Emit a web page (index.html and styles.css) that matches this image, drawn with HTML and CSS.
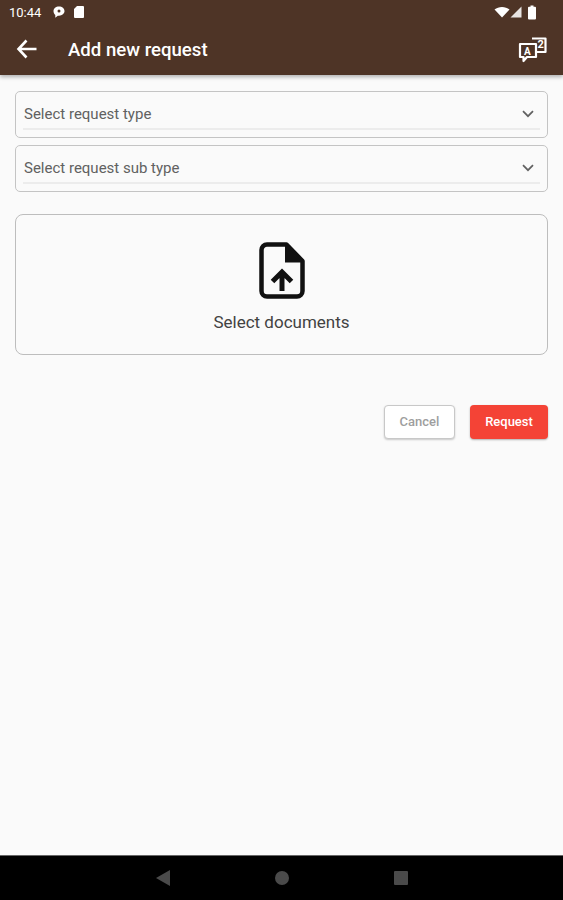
FILE: index.html
```html
<!DOCTYPE html>
<html lang="en">
<head>
  <meta charset="UTF-8">
  <meta name="viewport" content="width=device-width, initial-scale=1.0">
  <title>Add new request</title>
  <link rel="stylesheet" href="styles.css">
</head>
<body>

<header class="top">
  <div class="status-bar">
    <span class="time">10:44</span>
    <svg class="st-icon" width="14" height="14" viewBox="0 0 14 14"><path d="M7 1.500c3.200 0 5.500 2 5.500 4.600S10.200 10.700 7 10.700H5.800L3.300 12.800V10C2.200 9.200 1.500 7.800 1.500 6.100 1.500 3.500 3.800 1.500 7 1.500z" fill="#fff"/><circle cx="7" cy="6" r="1.500" fill="#4e3426"/></svg>
    <svg class="st-icon" width="12" height="14" viewBox="0 0 12 14"><path d="M4 1h6a1 1 0 0 1 1 1v10a1 1 0 0 1-1 1H2a1 1 0 0 1-1-1V4z" fill="#fff"/></svg>
    <span class="spacer"></span>
    <svg class="st-wifi" width="16" height="12" viewBox="0 0 16 12"><path d="M0.500 3.500C4.500 0 11.500 0 15.500 3.500L8 11.500z" fill="#fff"/></svg>
    <svg class="st-signal" width="12" height="12" viewBox="0 0 12 12"><path d="M11.500 0.500V11.500H0.500z" fill="#e8e4e2"/></svg>
    <svg class="st-battery" width="10" height="15" viewBox="0 0 10 15"><path d="M3.500 0.500h3v1.300H8a1 1 0 0 1 1 1V13.500a1 1 0 0 1-1 1H2a1 1 0 0 1-1-1V2.800a1 1 0 0 1 1-1h1.500z" fill="#fff"/></svg>
  </div>
  <div class="app-bar">
    <svg class="back" width="24" height="24" viewBox="0 0 24 24"><path d="M21.500 12H4M11.500 3.500L3.500 12l8 8.500" fill="none" stroke="#fff" stroke-width="2.600"/></svg>
    <h1>Add new request</h1>
    <svg class="lang" width="30" height="28" viewBox="0 0 30 28">
      <path d="M14 3.500h13.500v13.500H17" fill="none" stroke="#fff" stroke-width="2.200" stroke-linejoin="round"/>
      <path d="M2 9h16v13H9L5.500 26V22H2z" fill="#4e3426" stroke="#fff" stroke-width="2.200" stroke-linejoin="round"/>
      <text x="6" y="20" class="lang-a">A</text>
      <text x="19.500" y="13" class="lang-b">2</text>
    </svg>
  </div>
</header>

<main class="content">
  <div class="select-box">
    <div class="select-inner">
      <span>Select request type</span>
      <svg width="12" height="8" viewBox="0 0 12 8"><path d="M1 1.200l5 5 5-5" fill="none" stroke="#616161" stroke-width="1.700"/></svg>
    </div>
  </div>
  <div class="select-box">
    <div class="select-inner">
      <span>Select request sub type</span>
      <svg width="12" height="8" viewBox="0 0 12 8"><path d="M1 1.200l5 5 5-5" fill="none" stroke="#616161" stroke-width="1.700"/></svg>
    </div>
  </div>

  <div class="upload-box">
    <svg width="46" height="57" viewBox="0 0 46 57">
      <path d="M8 2.500H27.500L43.500 19V49A5.500 5.500 0 0 1 38 54.500H8A5.500 5.500 0 0 1 2.500 49V8A5.500 5.500 0 0 1 8 2.500z" fill="none" stroke="#111" stroke-width="4.500" stroke-linejoin="round"/>
      <path d="M26 3V20.500H43z" fill="#111"/>
      <path d="M23 49V32M13.500 39.500L23 30l9.500 9.500" fill="none" stroke="#111" stroke-width="5"/>
    </svg>
    <span>Select documents</span>
  </div>

  <div class="actions">
    <button class="btn-cancel">Cancel</button>
    <button class="btn-request">Request</button>
  </div>
</main>

<footer class="nav-bar">
  <svg width="14" height="16" viewBox="0 0 14 16"><path d="M14 0V16L0 8z" fill="#4a4a4a"/></svg>
  <span class="nav-dot"></span>
  <span class="nav-square"></span>
</footer>

</body>
</html>
```

FILE: styles.css
```css
* {
  box-sizing: border-box;
}

body {
  font-family: 'Roboto', sans-serif;
  background-color: #fafafa;
  margin: 0;
  height: 900px;
  display: flex;
  flex-direction: column;
  overflow: hidden;
}

.top {
  height: 75px;
  background-color: #4e3426;
  color: white;
  box-shadow: 0 2px 4px rgba(0, 0, 0, 0.3);
  padding: 0 16px 0 9px;
}

.status-bar {
  height: 24px;
  display: flex;
  align-items: center;
  gap: 7px;
  font-size: 13px;
}

.time {
  margin-right: 4px;
}

.spacer {
  flex: 1;
}

.st-wifi {
  margin-right: -7px;
}

.st-signal {
  margin-right: -2px;
}

.st-battery {
  margin-right: 10px;
}

.app-bar {
  height: 51px;
  display: flex;
  align-items: center;
  padding-left: 6px;
}

.back {
  margin-top: -1px;
}

.app-bar h1 {
  font-size: 18.600px;
  font-weight: 500;
  margin: 0 0 0 29px;
  flex: 1;
}

.lang {
  margin-right: -1px;
  margin-top: -2px;
}

.lang-a {
  font: bold 10px 'Roboto', sans-serif;
  fill: white;
}

.lang-b {
  font: bold 11px 'Roboto', sans-serif;
  fill: white;
}

.content {
  flex: 1;
  padding: 16px 15px 0;
}

.select-box {
  height: 47px;
  border: 1.500px solid #c4c4c4;
  border-radius: 5px;
  padding: 0 7px;
  margin-bottom: 7px;
}

.select-inner {
  height: 38px;
  border-bottom: 2px solid #ececec;
  display: flex;
  align-items: center;
  justify-content: space-between;
  padding: 8px 6px 0 1px;
  font-size: 15px;
  color: #616161;
}

.upload-box {
  height: 141px;
  margin-top: 22px;
  border: 1.500px solid #bdbdbd;
  border-radius: 8px;
  display: flex;
  flex-direction: column;
  align-items: center;
  padding-top: 27px;
  font-size: 17px;
  color: #424242;
}

.upload-box span {
  margin-top: 13px;
}

.actions {
  display: flex;
  justify-content: flex-end;
  gap: 15px;
  margin-top: 50px;
}

.actions button {
  height: 34px;
  padding: 0 0 1px;
  font-family: 'Roboto', sans-serif;
  font-size: 13px;
  font-weight: 500;
  border-radius: 4px;
  cursor: pointer;
}

.btn-cancel {
  width: 71px;
  background-color: white;
  color: #9e9e9e;
  border: 1.500px solid #c8c8c8;
  box-shadow: 0 1px 2px rgba(0, 0, 0, 0.2);
}

.btn-request {
  width: 78px;
  background-color: #f44336;
  color: white;
  border: none;
  box-shadow: 0 1px 2px rgba(0, 0, 0, 0.3);
}

.nav-bar {
  height: 45px;
  background-color: black;
  border-top: 1px solid #666;
  display: flex;
  align-items: center;
  justify-content: center;
  gap: 105px;
}

.nav-dot {
  width: 14px;
  height: 14px;
  background-color: #4a4a4a;
  border-radius: 50%;
}

.nav-square {
  width: 14px;
  height: 14px;
  background-color: #4a4a4a;
  border-radius: 1px;
}
```
